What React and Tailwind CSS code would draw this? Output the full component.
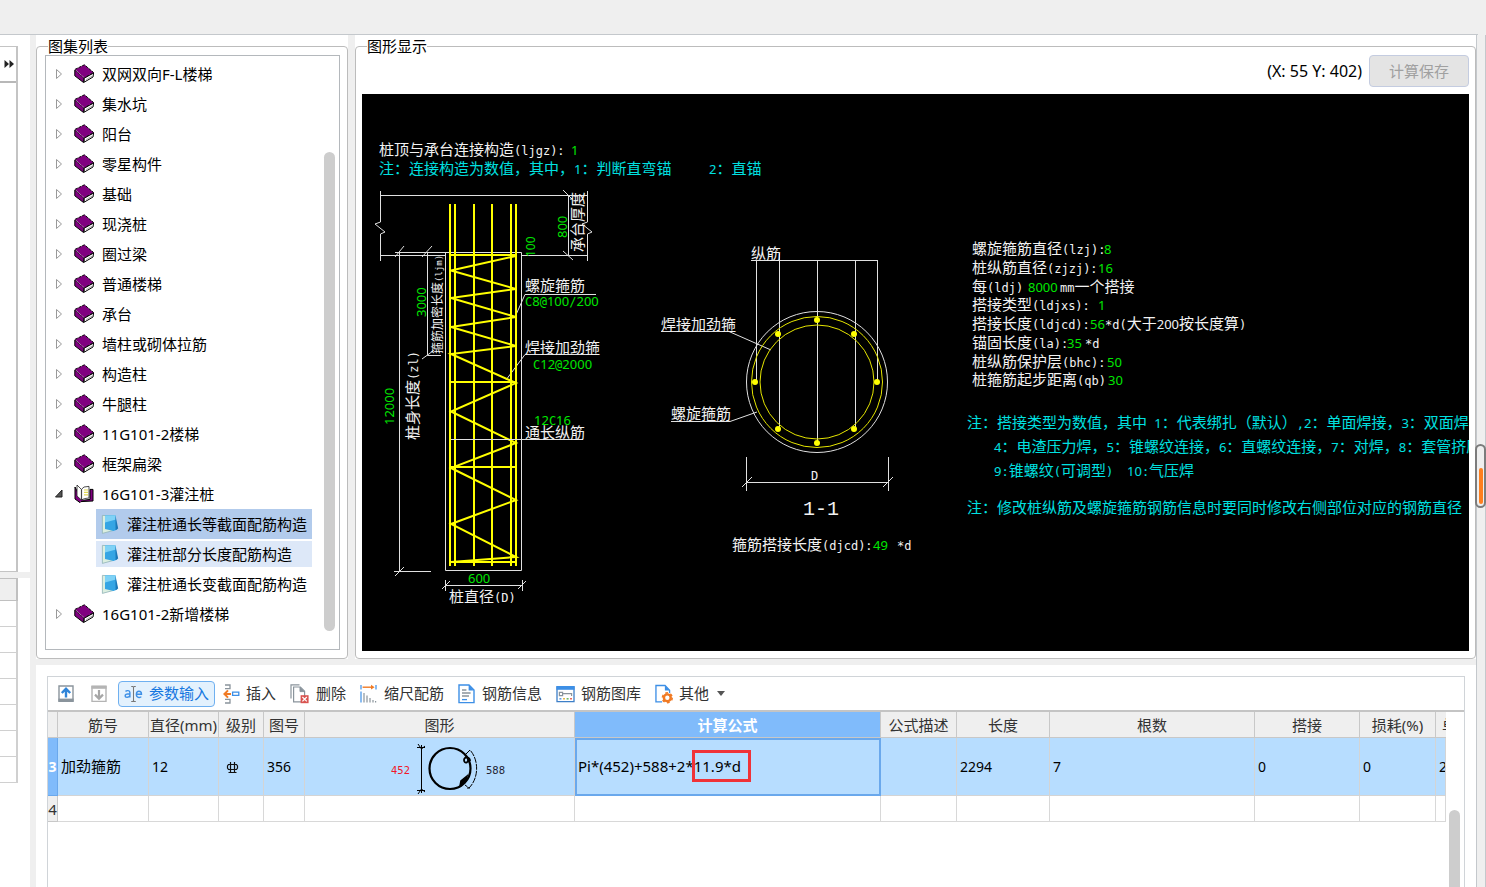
import { Fragment } from "react";

const uiFont = "font-['Noto_Sans','Noto_Sans_CJK_SC',sans-serif]";

const atlasGroups = [
  { name: "双网双向F-L楼梯" },
  { name: "集水坑" },
  { name: "阳台" },
  { name: "零星构件" },
  { name: "基础" },
  { name: "现浇桩" },
  { name: "圈过梁" },
  { name: "普通楼梯" },
  { name: "承台" },
  { name: "墙柱或砌体拉筋" },
  { name: "构造柱" },
  { name: "牛腿柱" },
  { name: "11G101-2楼梯" },
  { name: "框架扁梁" },
  {
    name: "16G101-3灌注桩",
    children: [
      { name: "灌注桩通长等截面配筋构造", state: "selected" },
      { name: "灌注桩部分长度配筋构造", state: "hover" },
      { name: "灌注桩通长变截面配筋构造" },
    ],
  },
  { name: "16G101-2新增楼梯" },
];

const columns = [
  { label: "筋号", width: "w-[91px]" },
  { label: "直径(mm)", width: "w-[70px]" },
  { label: "级别", width: "w-[45px]" },
  { label: "图号", width: "w-[41px]" },
  { label: "图形", width: "w-[270px]" },
  { label: "计算公式", width: "", active: true },
  { label: "公式描述", width: "w-[76px]" },
  { label: "长度", width: "w-[93px]" },
  { label: "根数", width: "w-[205px]" },
  { label: "搭接", width: "w-[105px]" },
  { label: "损耗(%)", width: "w-[76px]" },
  { label: "单", width: "w-[10px]", clipped: true },
];

/* ---------- icons ---------- */

const BookIcon = () => (
  <svg width="21" height="20" viewBox="0 0 21 20" className="shrink-0">
    <path d="M.8 6 10 14 9.6 18.6.8 11.8Z" fill="#800080" stroke="#000" />
    <path d="M10.2 14.2 19.6 9l-.6 4-8.8 5.2Z" fill="#fff" stroke="#000" />
    <path d="M1 5.4 10.4.8l9.2 7.8L10.2 14Z" fill="#800080" />
    <path d="M1 5.4 10.4.8l9.2 7.8L10.2 14" fill="none" stroke="#000" strokeDasharray="3 1" />
    <path d="m1.8 6.4 8.4 7.2" stroke="#c8a0c8" strokeDasharray="1 1" />
    <path d="m12 15.6 6-3.4" stroke="#999" strokeWidth=".8" />
  </svg>
);

const OpenBookIcon = () => (
  <svg width="21" height="20" viewBox="0 0 21 20" className="shrink-0">
    <path d="M1 3v12l5 3.6 1-1 12-.6V5.4h-3v10l-6.600.8L7 15Z" fill="#800080" stroke="#000" />
    <path d="M3 1 7.4 5.4V16L3 12Z" fill="#fff" stroke="#222" strokeWidth=".8" />
    <path d="M7.6 5.2 10 3l5-.6V14l-4.6.6L7.6 16Z" fill="#fff" stroke="#222" strokeWidth=".8" />
    <path d="M10 6h4M10 8.400h4M10 10.800h4" stroke="#e0d850" strokeWidth="1.2" />
  </svg>
);

const NoteIcon = () => (
  <svg width="20" height="20" viewBox="0 0 20 20" className="shrink-0">
    <path d="M1.4 1.4 13 2l-.4 14.400-11.200 3Z" fill="#dcefe0" stroke="#8fb2b8" strokeWidth=".8" />
    <path d="M4 1.600 14.400 1.200 16.200 15.400 12.600 17 4 15Z" fill="#35a5e4" />
    <path d="M4 1.600 14.400 1.200 15 5.400 4 8.600Z" fill="#7fd2f6" />
    <path d="m14.400 1.200 2.800 13.200-2.600 1.800Z" fill="#1d78b8" />
  </svg>
);

const UpIcon = () => (
  <svg width="17" height="18" viewBox="0 0 17 18">
    <path d="M1 1h14v15H1Z" fill="#fff" stroke="#8a949c" strokeWidth="1.4" />
    <path d="M.4 13.6h15.2V17H.4Z" fill="#8a949c" />
    <path d="M8 12.6V4M3.8 8 8 3.8 12.2 8" fill="none" stroke="#2f84d8" strokeWidth="2.4" />
  </svg>
);

const DownIcon = () => (
  <svg width="17" height="18" viewBox="0 0 17 18">
    <path d="M1 1.4h14v15H1Z" fill="#fff" stroke="#b4b4b4" strokeWidth="1.4" />
    <path d="M.4.6h15.2v3.2H.4Z" fill="#b4b4b4" />
    <path d="M8 5v8.6M4 9.6l4 4 4-4" fill="none" stroke="#a6a6a6" strokeWidth="2.2" />
  </svg>
);

const RenameIcon = () => (
  <svg width="19" height="18" viewBox="0 0 20 18">
    <g fill="none" stroke="#3d8fe6" strokeWidth="1.5">
      <path d="M1.6 6.4c1-1.4 4.6-1.4 4.6 1v5.2M6.2 8.8C3 8.8 1.2 9.4 1.2 11s3.6 2.2 5-.2" />
      <path d="M13 9.2h5.4c0-4-5.2-4.2-5.4 0 0 4 4 4 5.2 2.6" />
    </g>
    <path d="M7.6 1h1.6l.8.8.8-.8h1.6M10 1.6v14.8M7.6 17h1.6l.8-.8.8.8h1.6" fill="none" stroke="#777" strokeWidth="1.1" />
  </svg>
);

const InsertIcon = () => (
  <svg width="17" height="20" viewBox="0 0 17 20">
    <path d="M2 1h5v3.6H2M2 15.4h5V19H2" fill="none" stroke="#8a949c" strokeWidth="1.3" />
    <path d="M8 10H2M5 6.4 1.4 10 5 13.6" fill="none" stroke="#f07a24" strokeWidth="2" />
    <path d="M9.6 8.2h6.2v3.2H9.6Z" fill="none" stroke="#3d8fe6" strokeWidth="1.3" />
  </svg>
);

const DeleteIcon = () => (
  <svg width="20" height="20" viewBox="0 0 20 20">
    <path d="M1 14.5V.8h8.5" fill="none" stroke="#8a949c" strokeWidth="1.2" />
    <path d="M3.6 3h6.8l4.2 4.2v10.600h-11Z" fill="#fff" stroke="#8a949c" strokeWidth="1.2" />
    <path d="M10 3v4.6h4.6" fill="#8a949c" stroke="#8a949c" />
    <path d="M10.6 11.2h8v8h-8Z" fill="#d9534f" />
    <path d="m12.4 13 4.4 4.4m0-4.4-4.4 4.4" stroke="#fff" strokeWidth="1.2" />
  </svg>
);

const ScaleIcon = () => (
  <svg width="18" height="20" viewBox="0 0 18 20">
    <path d="M1 1v4.6M16 1v4.6" stroke="#3d8fe6" strokeWidth="1.2" />
    <path d="M2.6 3.2h10" stroke="#f07a24" strokeWidth="1.4" />
    <path d="M11 .8 14.6 3.2 11 5.6Z" fill="#f07a24" />
    <path d="M1 7.4v11.2" stroke="#3d8fe6" strokeWidth="1.2" />
    <path d="M4 9v9.6M7 11.6v7M10 14v4.6M13 16v2.6M15.6 17v1.6" stroke="#8a949c" strokeWidth="1.2" />
  </svg>
);

const InfoIcon = () => (
  <svg width="18" height="20" viewBox="0 0 18 20">
    <path d="M1 1h10l5 5v12.6H1Z" fill="#fff" stroke="#3d8fe6" strokeWidth="1.4" />
    <path d="M10.6.8v5.6H16Z" fill="#3d8fe6" />
    <path d="M4 6h4.4M4 9h8.6M4 12h7" stroke="#8a949c" strokeWidth="1.3" />
    <path d="M4 15.6h5" stroke="#3d8fe6" strokeWidth="1.3" />
  </svg>
);

const GalleryIcon = () => (
  <svg width="19" height="18" viewBox="0 0 19 18">
    <path d="M1 2h17v14.6H1Z" fill="#fff" stroke="#3d7fc8" strokeWidth="1.3" />
    <path d="M.4 1h18.2v3.8H.4Z" fill="#3d8fe6" />
    <path d="M3.4 10.6V7.4h3.2v3.2ZM6.6 8.6h9V11" fill="none" stroke="#8a949c" strokeWidth="1.2" />
    <path d="M3.4 13.8h2" stroke="#5b9ee8" strokeWidth="1.6" />
    <path d="M7 13.8h2" stroke="#e8b84a" strokeWidth="1.6" />
    <path d="M10.6 13.8h2" stroke="#6cba6c" strokeWidth="1.6" />
    <path d="M14 13.8h2" stroke="#e86a5a" strokeWidth="1.6" />
  </svg>
);

const OtherIcon = () => (
  <svg width="18" height="20" viewBox="0 0 19 20">
    <path d="M7.5 18.4H1V1h9.6l4.8 5v3" fill="#fff" stroke="#3d8fe6" strokeWidth="1.4" />
    <path d="M10.4.8v5.6h5Z" fill="#3d8fe6" />
    <circle cx="13" cy="14" r="3.6" fill="#fff" stroke="#f07a24" strokeWidth="2.6" />
    <circle cx="13" cy="14" r="5.2" fill="none" stroke="#f07a24" strokeWidth="1.6" strokeDasharray="2.8 2.64" />
  </svg>
);

const tools = [
  { icon: UpIcon, label: "", title: "上移" },
  { icon: DownIcon, label: "", title: "下移" },
  { icon: RenameIcon, label: "参数输入", active: true },
  { icon: InsertIcon, label: "插入" },
  { icon: DeleteIcon, label: "删除" },
  { icon: ScaleIcon, label: "缩尺配筋" },
  { icon: InfoIcon, label: "钢筋信息" },
  { icon: GalleryIcon, label: "钢筋图库" },
  { icon: OtherIcon, label: "其他", menu: true },
];

/* ---------- drawing ---------- */

const WHITE = "#f2f2f2";
const GREEN = "#00e600";
const CYAN = "#00e0e0";

// letters are set in a monospace face, digits in a narrow sans, like plotted text
const CadText = ({ x, y, children, color = WHITE, size = 15, rotate }) => {
  const runs = children.match(/[0-9]+|[\x20-\x2f\x3a-\x7e]+|[^\x20-\x7e]+/g);
  return (
    <text
      x={x}
      y={y}
      fill={color}
      fontSize={size}
      transform={rotate ? `rotate(-90 ${x} ${y})` : undefined}
      className="whitespace-pre font-['Noto_Sans_CJK_SC',sans-serif]"
    >
      {runs.map((run, i) => (
        <Fragment key={i}>
          {/^[0-9]/.test(run) ? (
            <tspan fontSize={size - 2} className="font-['Noto_Sans',sans-serif]">{run}</tspan>
          ) : /^[\x20-\x7e]/.test(run) ? (
            <tspan fontSize={size - 3} className="font-['DejaVu_Sans_Mono',monospace]">{run}</tspan>
          ) : (
            run
          )}
        </Fragment>
      ))}
    </text>
  );
};

const labels = [
  [379, 155, "桩顶与承台连接构造(ljgz):"],
  [571, 155, "1", GREEN],
  [379, 174, "注：连接构造为数值，其中，1：判断直弯锚", CYAN],
  [709, 174, "2：直锚", CYAN],
  [525, 291, "螺旋箍筋"],
  [525, 353, "焊接加劲箍"],
  [525, 438, "通长纵筋"],
  [525, 306, "C8@100/200", GREEN],
  [533, 369, "C12@2000", GREEN],
  [534, 425, "12C16", GREEN],
  [468, 583, "600", GREEN],
  [449, 602, "桩直径(D)"],
  [751, 259, "纵筋"],
  [661, 330, "焊接加劲箍"],
  [671, 419, "螺旋箍筋"],
  [811, 480, "D"],
  [732, 550, "箍筋搭接长度(djcd):"],
  [873, 550, "49", GREEN],
  [897, 550, "*d"],
  [972, 254, "螺旋箍筋直径(lzj):"],
  [1104, 254, "8", GREEN],
  [972, 273, "桩纵筋直径(zjzj):"],
  [1098, 273, "16", GREEN],
  [972, 292, "每(ldj)"],
  [1028, 292, "8000", GREEN],
  [1060, 292, "mm一个搭接"],
  [972, 310, "搭接类型(ldjxs):"],
  [1098, 310, "1", GREEN],
  [972, 329, "搭接长度(ldjcd):"],
  [1090, 329, "56", GREEN],
  [1105, 329, "*d(大于200按长度算)"],
  [972, 348, "锚固长度(la):"],
  [1067, 348, "35", GREEN],
  [1085, 348, "*d"],
  [972, 367, "桩纵筋保护层(bhc):"],
  [1107, 367, "50", GREEN],
  [972, 385, "桩箍筋起步距离(qb)"],
  [1108, 385, "30", GREEN],
  [967, 428, "注：搭接类型为数值，其中 1：代表绑扎（默认）,2：单面焊接，3：双面焊", CYAN],
  [994, 452, "4：电渣压力焊，5：锥螺纹连接，6：直螺纹连接，7：对焊，8：套管挤压", CYAN],
  [994, 476, "9:锥螺纹(可调型)", CYAN],
  [1127, 476, "10:气压焊", CYAN],
  [967, 513, "注：修改桩纵筋及螺旋箍筋钢筋信息时要同时修改右侧部位对应的钢筋直径", CYAN],
];

const rebarDots = [
  [817, 320], [778, 334], [854, 334], [755, 382],
  [877, 382], [778, 429], [854, 429], [817, 443],
];

const PileDrawing = () => (
  <svg className="block h-full w-full bg-black" role="img" aria-label="灌注桩通长等截面配筋构造">
    <g transform="translate(-362 -94)">
      {/* pile elevation */}
      <g fill="none" stroke="#e0e0e0">
        <path d="M380 195.5H587M380.5 191V222L375 224 385 232 380.5 234V261M587.5 191V222L582 224 592 232 587.5 234V261" />
        <path d="M380 255.5H446M522 255.5H587M568.5 195V256M563 190 572 199M563 251 573 260" />
        <path d="M445.5 252.5H521.5V570.5H445.5Z" />
        <path d="M395 252.5H446M399.5 252V571M427.5 252V355.5H441M395 257 404 246M422 257 432 246M422 359 433 351" />
        <path d="M394 571.5H431M395 576 404 567" />
        <path d="M445 585.5H522M445.5 580V591M522.5 580V591M442 589 450 581M518 589 526 581" />
        <path d="M596 294.5H525L515 317M599 354.5H525L506 380" />
      </g>
      <g fill="none" stroke="#ffff00">
        <path strokeWidth="2" d="M450 204V566M455 204V566M511 204V566M516 204V566M474 204V566M492 204V566" />
        <path strokeWidth="2" d="M450 255H516M450 382H516M450 467H516M450 562H516" />
        <path strokeWidth="2" d="M516 256 451 270.5 516 289 451 298 516 317 451 327 516 346 451 354 516 383 451 411.5 516 443 451 468 516 500 451 524 516 557 451 562" />
      </g>
      <path d="M451 439.5H583" stroke="#e0e0e0" />
      <CadText x={583} y={252} rotate>承台厚度</CadText>
      <CadText x={567} y={238} color={GREEN} rotate>800</CadText>
      <CadText x={535} y={257} color={GREEN} size={14} rotate>100</CadText>
      <CadText x={426} y={317} color={GREEN} rotate>3000</CadText>
      <CadText x={442} y={354} size={12} rotate>箍筋加密长度(ljm)</CadText>
      <CadText x={394} y={425} color={GREEN} rotate>12000</CadText>
      <CadText x={418} y={440} rotate>桩身长度(zl)</CadText>

      {/* section 1-1 */}
      <g fill="none" stroke="#e0e0e0">
        <path d="M751 260.5H878M756.5 260V381M779.5 253V429M817.5 260V442M855.5 260V429M877.5 260V381" />
        <circle cx="817" cy="382" r="70.5" />
        <path d="M661 331.5H729L771 350M671 421.5H730L757 412" />
        <path d="M747 482.5H888M746.5 457V491M888.5 457V491M742 487 752 477M883 487 893 477" />
      </g>
      <g fill="none" stroke="#e6e600">
        <circle cx="817" cy="382" r="65.5" />
        <circle cx="817" cy="382" r="57" />
      </g>
      {rebarDots.map(([x, y]) => (
        <circle key={`${x}-${y}`} cx={x} cy={y} r="3" fill="#ffff00" />
      ))}
      <text x="803" y="515" fontSize="20" fill={WHITE} className="font-['Liberation_Mono',monospace]">1-1</text>

      {labels.map(([x, y, text, color]) => (
        <CadText key={`${x}-${y}`} x={x} y={y} color={color}>{text}</CadText>
      ))}
    </g>
  </svg>
);

const StirrupShape = () => (
  <svg width="130" height="56" viewBox="0 0 130 56" className="mx-auto block">
    <text x="15" y="35" fontSize="10" fill="#f01828" className="font-['DejaVu_Sans',sans-serif]">452</text>
    <g fill="none" stroke="#000">
      <path d="M45.5 6v48M41 8.500h8M42 5l3.500 5 3.500-3M41 51.500h8M42 55l3.500-5 3.500 3" />
      <circle cx="74" cy="29.500" r="20.500" strokeWidth="2.2" />
      <path d="M94 22c0-4-6-5-6-1s5 3 4-1" strokeWidth="1.8" />
      <path d="m91 37-6 5-1 5 6-5Z" fill="#000" strokeWidth="1.6" />
      <path d="m90 15 4-4c9 10 9 28-1 38l-4-3M91 49h3" strokeDasharray="6 1" />
    </g>
    <text x="110" y="35" fontSize="10" fill="#223" className="font-['DejaVu_Sans',sans-serif]">588</text>
  </svg>
);

const GradeMark = () => (
  <svg width="13" height="14" viewBox="0 0 13 14" className="ml-1 block" role="img" aria-label="HRB400">
    <path d="M2.500 4.500h8l1 1.500v2l-1 1.500h-8L1.500 8V6ZM4.500 2v10M8.500 2v10M2.500 12.500h8" fill="none" stroke="#111" strokeWidth="1.2" />
  </svg>
);

/* ---------- panels ---------- */

const GroupBox = ({ title, className, children }) => (
  <section className={`flex min-h-0 min-w-0 bg-white pt-0.5 ${className}`}>
    <fieldset className="flex min-h-0 min-w-0 flex-1 flex-col rounded border border-[#bcbcbc]">
      <legend className="ml-[11px] text-[15px] leading-[18px]">{title}</legend>
      {children}
    </fieldset>
  </section>
);

const TreeLeaf = ({ item }) => (
  <li className="flex h-[30px] items-center">
    <button
      type="button"
      className={
        item.state === "selected"
          ? "flex h-[30px] flex-1 items-center gap-1.5 bg-[#b2cbec] pl-[5px] text-left"
          : item.state === "hover"
            ? "flex h-[26px] flex-1 items-center gap-1.5 bg-[#dde8f8] pl-[5px] text-left"
            : "flex h-[26px] flex-1 items-center gap-1.5 pl-[5px] text-left"
      }
    >
      <NoteIcon />
      <span className="whitespace-nowrap">{item.name}</span>
    </button>
  </li>
);

const AtlasTree = () => (
  <div className="mr-[7px] mb-2 ml-2 flex min-h-0 flex-1 overflow-hidden border border-[#b4b8bc]">
    <ul className="min-w-0 flex-1 pt-[3px] text-[15px]">
      {atlasGroups.map((group) => (
        <li key={group.name}>
          <button type="button" className="flex h-[30px] items-center pl-[7px]">
            <svg width="12" height="12" viewBox="0 0 12 12" className="mr-[9px] shrink-0">
              {group.children ? (
                <path d="M9 2v7H2.500Z" fill="#555" stroke="#222" />
              ) : (
                <path d="M3.500 1.500v9l5-4.500Z" fill="#fff" stroke="#999" />
              )}
            </svg>
            {group.children ? <OpenBookIcon /> : <BookIcon />}
            <span className="ml-[7px] whitespace-nowrap">{group.name}</span>
          </button>
          {group.children && (
            <ul className="pl-[50px]">
              {group.children.map((item) => (
                <TreeLeaf key={item.name} item={item} />
              ))}
            </ul>
          )}
        </li>
      ))}
    </ul>
    <div className="mt-24 mr-1 mb-[18px] ml-3 w-[11px] rounded-full bg-[#cdcdcd]" />
  </div>
);

const SideStrip = () => (
  <aside className="flex w-[30px] shrink-0 flex-col bg-white pt-[11px] pr-3">
    <div className="flex min-h-0 flex-1 flex-col border-t border-r-2 border-b border-[#c4c4c4]">
      <button type="button" aria-label="展开" className="flex h-9 items-center border-b-2 border-[#b8b8b8] pl-1">
        <svg width="11" height="8" viewBox="0 0 11 8">
          <path d="M.5 0v8L5 4ZM5.500 0v8L10 4Z" fill="#222" />
        </svg>
      </button>
    </div>
    <div className="-mr-3 h-1.5 bg-[#efefef]" />
    <div className="h-[309px]">
      <div className="h-[23px] border-t border-r-2 border-b border-[#c0c0c0] bg-[#efefef]" />
      {[1, 2, 3, 4, 5, 6, 7].map((row) => (
        <div key={row} className="h-[26px] border-r-2 border-b border-[#d0d0d0]" />
      ))}
    </div>
  </aside>
);

const Toolbar = () => (
  <div className="flex h-[35px] items-center gap-0.5 border-b-2 border-[#c4c4c4] pl-1 text-[15px] text-[#333]">
    {tools.map(({ icon: Icon, label, title, active, menu }) => (
      <button
        key={label || title}
        type="button"
        aria-label={label || title}
        className={
          active
            ? "flex h-[26px] items-center gap-1.5 rounded border border-[#6fb0f0] bg-[#e3f1fd] px-[5px] whitespace-nowrap text-[#1677e0]"
            : label
              ? "flex h-[26px] items-center gap-1.5 px-1.5 whitespace-nowrap"
              : "flex h-[26px] w-[31px] items-center pl-1.5"
        }
      >
        <Icon />
        {label && <span>{label}</span>}
        {menu && (
          <svg width="8" height="5" viewBox="0 0 8 5" className="ml-0.5">
            <path d="M0 0h8L4 5Z" fill="#555" />
          </svg>
        )}
      </button>
    ))}
  </div>
);

const RebarTable = () => (
  <table className="w-full table-fixed border-separate border-spacing-0 text-[15px]">
    <thead>
      <tr className="h-[26px] bg-[#efefef] text-[#333]">
        <th className="w-[10px] border-r border-b border-[#c8c8c8] p-0" />
        {columns.map((col) => (
          <th
            key={col.label}
            scope="col"
            className={`overflow-hidden border-b border-[#c8c8c8] leading-5 whitespace-nowrap ${col.width} ${
              col.active ? "bg-[#80bbfb] font-bold text-white" : "font-normal"
            } ${col.clipped ? "p-0 pl-1.5 text-left" : "border-r p-0"}`}
          >
            {col.label}
          </th>
        ))}
      </tr>
    </thead>
    <tbody>
      <tr className="h-[58px] bg-[#b7ddff] text-sm [&>td]:border-r [&>td]:border-b [&>td]:border-[#d4d4d4] [&>td]:p-0 [&>td]:pl-[3px]">
        <th scope="row" className="overflow-hidden border-r border-b border-[#6aa8ec] bg-[#80bbfb] p-0 text-white">3</th>
        <td className="text-[15px]">加劲箍筋</td>
        <td>12</td>
        <td><GradeMark /></td>
        <td>356</td>
        <td><StirrupShape /></td>
        <td className="text-[15px] whitespace-nowrap outline-2 -outline-offset-2 outline-[#6aa8ec]">
          Pi*(452)+588+2*
          <span className="py-1 pr-2 outline-3 -outline-offset-1 outline-[#f03238]">11.9*d</span>
        </td>
        <td />
        <td>2294</td>
        <td>7</td>
        <td>0</td>
        <td>0</td>
        <td className="overflow-hidden">2</td>
      </tr>
      <tr className="h-[26px]">
        <th scope="row" className="border-r border-b border-[#c8c8c8] bg-[#efefef] p-0 leading-5 font-normal text-[#333]">4</th>
        {columns.map((col) => (
          <td key={col.label} className="border-r border-b border-[#d8d8d8] p-0" />
        ))}
      </tr>
    </tbody>
  </table>
);

const App = () => (
  <div className={`relative flex h-screen flex-col overflow-hidden bg-[#efefef] text-black ${uiFont}`}>
    <div className="mr-2 h-[35px] shrink-0 border-b border-[#c4c8cc]" />
    <div className="flex min-h-0 flex-1 border-r border-[#c4c8cc]">
      <SideStrip />
      <main className="mr-2 ml-1.5 flex min-w-0 flex-1 flex-col border-r border-[#c4c8cc]">
        <div className="flex min-h-0 flex-1 gap-[7px]">
          <GroupBox title="图集列表" className="w-[312px] shrink-0">
            <AtlasTree />
          </GroupBox>
          <GroupBox title="图形显示" className="flex-1">
            <div className="flex items-center justify-end gap-[7px] pr-1.5 text-[15px]">
              <output className="text-base leading-5">(X: 55 Y: 402)</output>
              <button type="button" disabled className="h-8 w-[100px] rounded border border-[#c4cce0] bg-[#e4e4e4] text-[#a0a0a0]">
                计算保存
              </button>
            </div>
            <div className="mx-1.5 my-[7px] min-h-0 flex-1 overflow-hidden">
              <PileDrawing />
            </div>
          </GroupBox>
        </div>

        <div className="mt-1.5 h-[222px] shrink-0 bg-white pt-[11px] pr-[11px] pl-[11px]">
          <div className="flex h-full flex-col border border-b-0 border-[#d0d4d8]">
            <Toolbar />
            <div className="flex min-h-0 flex-1">
              <div className="min-w-0 flex-1 overflow-hidden">
                <RebarTable />
              </div>
              <div className="mt-[98px] mr-1 ml-[3px] w-[11px] shrink-0 rounded-t-full bg-[#cdcdcd]" />
            </div>
          </div>
        </div>
      </main>
    </div>

    {/* dock handle floating over the right edge */}
    <div className="absolute top-1/2 right-0 flex h-16 w-[11px] items-end justify-center rounded-md border-2 border-[#7c7c7c] bg-[#efefef] pb-0.5">
      <div className="h-9 w-1 rounded-full bg-[#ff7f1e]" />
    </div>
  </div>
);

export default App;
